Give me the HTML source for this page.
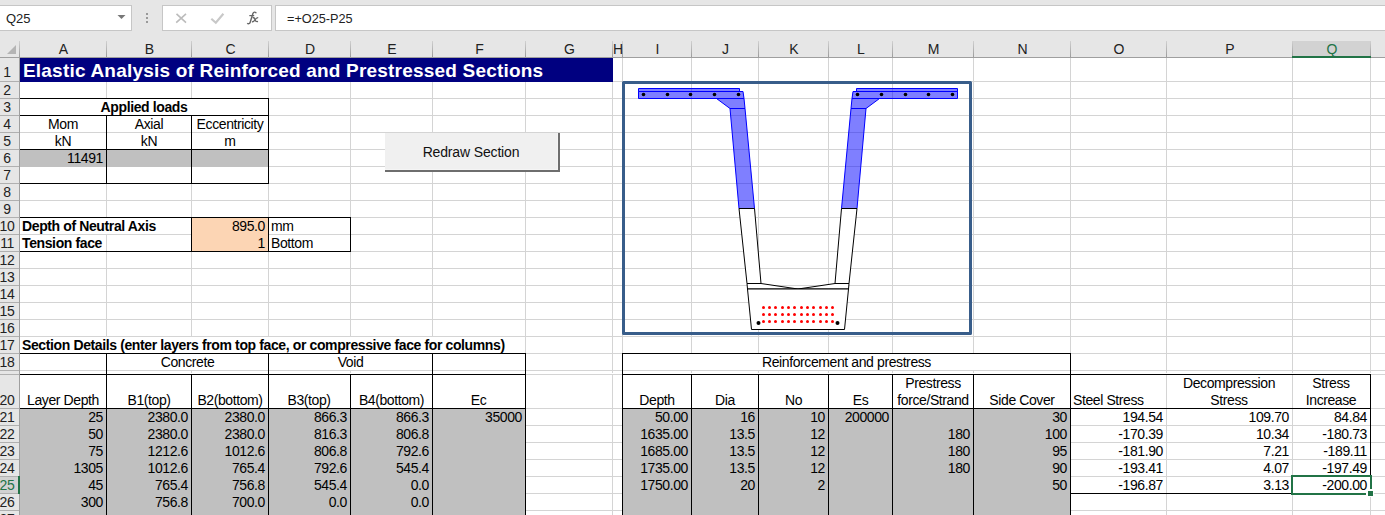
<!DOCTYPE html>
<html><head><meta charset="utf-8"><style>
html,body{margin:0;padding:0;}
body{width:1385px;height:515px;overflow:hidden;position:relative;background:#fff;font-family:"Liberation Sans", sans-serif;font-size:13.33px;color:#000;}
body>div{position:absolute;}
.t{white-space:pre;line-height:15px;height:15px;}
</style></head><body>
<div style="left:0px;top:0px;width:1385px;height:58px;background:#e6e6e6"></div>
<div style="left:-2px;top:5px;width:134px;height:26px;background:#fff;border:1px solid #c6c6c6;box-sizing:border-box"></div>
<div style="left:162px;top:5px;width:110px;height:26px;background:#fff;border:1px solid #c6c6c6;box-sizing:border-box"></div>
<svg style="position:absolute;left:0;top:0" width="300" height="40"><path d="M256.3,13.2 C255.6,11.6 253.6,11.7 252.9,13.6 L250.2,22.2 C249.7,23.9 248.2,24.1 247.2,23.2" stroke="#666" stroke-width="1.4" fill="none"/><path d="M249.3,15.6 L254.2,15.6" stroke="#666" stroke-width="1.2"/><path d="M252.6,17.6 C254,17.2 254.5,18 255,19.5 C255.5,21 256.2,22 258,21.4 M258.2,17.6 C256.8,17.4 255.5,19 254.6,20.3 C253.8,21.5 253,22 252,21.6" stroke="#666" stroke-width="1.3" fill="none"/></svg>
<div style="left:275px;top:5px;width:1120px;height:26px;background:#fff;border:1px solid #c6c6c6;box-sizing:border-box"></div>
<svg style="left:0;top:0;position:absolute" width="400" height="40"><polygon points="117.5,15 125.5,15 121.5,19" fill="#777"/><rect x="146" y="13" width="2" height="2" fill="#999"/><rect x="146" y="17" width="2" height="2" fill="#999"/><rect x="146" y="21" width="2" height="2" fill="#999"/><path d="M176.5,13.8 L186,22.6 M186,13.8 L176.2,22.6" stroke="#bcbcbc" stroke-width="1.6" fill="none"/><path d="M211.3,18.8 L215.8,22.8 L223.4,13.8" stroke="#c8c8c8" stroke-width="2.2" fill="none"/></svg>
<div class="t" style="left:6px;top:11px;font-size:13px;color:#222;">Q25</div>
<div class="t" style="left:287px;top:12px;font-size:12.7px;color:#222;">=+O25-P25</div>
<div style="left:0px;top:57px;width:1385px;height:1px;background:#9f9f9f"></div>
<svg style="left:0;top:0;position:absolute" width="20" height="58"><polygon points="16,45 16,54 7,54" fill="#b4b4b4"/></svg>
<div style="left:1293px;top:41px;width:77px;height:15px;background:#d2d2d2"></div>
<div style="left:19px;top:41px;width:1px;height:16px;background:linear-gradient(#d0d0d0,#9c9c9c)"></div>
<div style="left:106px;top:41px;width:1px;height:16px;background:linear-gradient(#d0d0d0,#9c9c9c)"></div>
<div style="left:191px;top:41px;width:1px;height:16px;background:linear-gradient(#d0d0d0,#9c9c9c)"></div>
<div style="left:268px;top:41px;width:1px;height:16px;background:linear-gradient(#d0d0d0,#9c9c9c)"></div>
<div style="left:350px;top:41px;width:1px;height:16px;background:linear-gradient(#d0d0d0,#9c9c9c)"></div>
<div style="left:432px;top:41px;width:1px;height:16px;background:linear-gradient(#d0d0d0,#9c9c9c)"></div>
<div style="left:525px;top:41px;width:1px;height:16px;background:linear-gradient(#d0d0d0,#9c9c9c)"></div>
<div style="left:612px;top:41px;width:1px;height:16px;background:linear-gradient(#d0d0d0,#9c9c9c)"></div>
<div style="left:622px;top:41px;width:1px;height:16px;background:linear-gradient(#d0d0d0,#9c9c9c)"></div>
<div style="left:691px;top:41px;width:1px;height:16px;background:linear-gradient(#d0d0d0,#9c9c9c)"></div>
<div style="left:758px;top:41px;width:1px;height:16px;background:linear-gradient(#d0d0d0,#9c9c9c)"></div>
<div style="left:828px;top:41px;width:1px;height:16px;background:linear-gradient(#d0d0d0,#9c9c9c)"></div>
<div style="left:892px;top:41px;width:1px;height:16px;background:linear-gradient(#d0d0d0,#9c9c9c)"></div>
<div style="left:973px;top:41px;width:1px;height:16px;background:linear-gradient(#d0d0d0,#9c9c9c)"></div>
<div style="left:1070px;top:41px;width:1px;height:16px;background:linear-gradient(#d0d0d0,#9c9c9c)"></div>
<div style="left:1166px;top:41px;width:1px;height:16px;background:linear-gradient(#d0d0d0,#9c9c9c)"></div>
<div style="left:1292px;top:41px;width:1px;height:16px;background:linear-gradient(#d0d0d0,#9c9c9c)"></div>
<div style="left:1370px;top:41px;width:1px;height:16px;background:linear-gradient(#d0d0d0,#9c9c9c)"></div>
<div class="t" style="left:-336.5px;width:800px;text-align:center;top:42px;font-size:14px;color:#222;">A</div>
<div class="t" style="left:-250.5px;width:800px;text-align:center;top:42px;font-size:14px;color:#222;">B</div>
<div class="t" style="left:-169.5px;width:800px;text-align:center;top:42px;font-size:14px;color:#222;">C</div>
<div class="t" style="left:-90.0px;width:800px;text-align:center;top:42px;font-size:14px;color:#222;">D</div>
<div class="t" style="left:-8.0px;width:800px;text-align:center;top:42px;font-size:14px;color:#222;">E</div>
<div class="t" style="left:79.5px;width:800px;text-align:center;top:42px;font-size:14px;color:#222;">F</div>
<div class="t" style="left:169.5px;width:800px;text-align:center;top:42px;font-size:14px;color:#222;">G</div>
<div class="t" style="left:218.0px;width:800px;text-align:center;top:42px;font-size:14px;color:#222;">H</div>
<div class="t" style="left:257.5px;width:800px;text-align:center;top:42px;font-size:14px;color:#222;">I</div>
<div class="t" style="left:325.5px;width:800px;text-align:center;top:42px;font-size:14px;color:#222;">J</div>
<div class="t" style="left:394.0px;width:800px;text-align:center;top:42px;font-size:14px;color:#222;">K</div>
<div class="t" style="left:461.0px;width:800px;text-align:center;top:42px;font-size:14px;color:#222;">L</div>
<div class="t" style="left:533.5px;width:800px;text-align:center;top:42px;font-size:14px;color:#222;">M</div>
<div class="t" style="left:622.5px;width:800px;text-align:center;top:42px;font-size:14px;color:#222;">N</div>
<div class="t" style="left:719.0px;width:800px;text-align:center;top:42px;font-size:14px;color:#222;">O</div>
<div class="t" style="left:830.0px;width:800px;text-align:center;top:42px;font-size:14px;color:#222;">P</div>
<div class="t" style="left:932.0px;width:800px;text-align:center;top:42px;font-size:14px;color:#217346;">Q</div>
<div style="left:1292px;top:56px;width:79px;height:2px;background:#217346"></div>
<div style="left:0px;top:58px;width:20px;height:457px;background:#e6e6e6"></div>
<div style="left:0px;top:477px;width:19px;height:16px;background:#d2d2d2"></div>
<div style="left:0px;top:81px;width:19px;height:1px;background:#b0b0b0"></div>
<div class="t" style="left:-393px;width:800px;text-align:center;top:65px;font-size:14px;letter-spacing:-0.4px;color:#222;">1</div>
<div style="left:0px;top:98px;width:19px;height:1px;background:#b0b0b0"></div>
<div class="t" style="left:-393px;width:800px;text-align:center;top:83px;font-size:14px;letter-spacing:-0.4px;color:#222;">2</div>
<div style="left:0px;top:115px;width:19px;height:1px;background:#b0b0b0"></div>
<div class="t" style="left:-393px;width:800px;text-align:center;top:100px;font-size:14px;letter-spacing:-0.4px;color:#222;">3</div>
<div style="left:0px;top:132px;width:19px;height:1px;background:#b0b0b0"></div>
<div class="t" style="left:-393px;width:800px;text-align:center;top:117px;font-size:14px;letter-spacing:-0.4px;color:#222;">4</div>
<div style="left:0px;top:149px;width:19px;height:1px;background:#b0b0b0"></div>
<div class="t" style="left:-393px;width:800px;text-align:center;top:134px;font-size:14px;letter-spacing:-0.4px;color:#222;">5</div>
<div style="left:0px;top:166px;width:19px;height:1px;background:#b0b0b0"></div>
<div class="t" style="left:-393px;width:800px;text-align:center;top:151px;font-size:14px;letter-spacing:-0.4px;color:#222;">6</div>
<div style="left:0px;top:183px;width:19px;height:1px;background:#b0b0b0"></div>
<div class="t" style="left:-393px;width:800px;text-align:center;top:168px;font-size:14px;letter-spacing:-0.4px;color:#222;">7</div>
<div style="left:0px;top:200px;width:19px;height:1px;background:#b0b0b0"></div>
<div class="t" style="left:-393px;width:800px;text-align:center;top:185px;font-size:14px;letter-spacing:-0.4px;color:#222;">8</div>
<div style="left:0px;top:217px;width:19px;height:1px;background:#b0b0b0"></div>
<div class="t" style="left:-393px;width:800px;text-align:center;top:202px;font-size:14px;letter-spacing:-0.4px;color:#222;">9</div>
<div style="left:0px;top:234px;width:19px;height:1px;background:#b0b0b0"></div>
<div class="t" style="left:-393px;width:800px;text-align:center;top:219px;font-size:14px;letter-spacing:-0.4px;color:#222;">10</div>
<div style="left:0px;top:251px;width:19px;height:1px;background:#b0b0b0"></div>
<div class="t" style="left:-393px;width:800px;text-align:center;top:236px;font-size:14px;letter-spacing:-0.4px;color:#222;">11</div>
<div style="left:0px;top:268px;width:19px;height:1px;background:#b0b0b0"></div>
<div class="t" style="left:-393px;width:800px;text-align:center;top:253px;font-size:14px;letter-spacing:-0.4px;color:#222;">12</div>
<div style="left:0px;top:285px;width:19px;height:1px;background:#b0b0b0"></div>
<div class="t" style="left:-393px;width:800px;text-align:center;top:270px;font-size:14px;letter-spacing:-0.4px;color:#222;">13</div>
<div style="left:0px;top:302px;width:19px;height:1px;background:#b0b0b0"></div>
<div class="t" style="left:-393px;width:800px;text-align:center;top:287px;font-size:14px;letter-spacing:-0.4px;color:#222;">14</div>
<div style="left:0px;top:319px;width:19px;height:1px;background:#b0b0b0"></div>
<div class="t" style="left:-393px;width:800px;text-align:center;top:304px;font-size:14px;letter-spacing:-0.4px;color:#222;">15</div>
<div style="left:0px;top:336px;width:19px;height:1px;background:#b0b0b0"></div>
<div class="t" style="left:-393px;width:800px;text-align:center;top:321px;font-size:14px;letter-spacing:-0.4px;color:#222;">16</div>
<div style="left:0px;top:353px;width:19px;height:1px;background:#b0b0b0"></div>
<div class="t" style="left:-393px;width:800px;text-align:center;top:338px;font-size:14px;letter-spacing:-0.4px;color:#222;">17</div>
<div style="left:0px;top:370px;width:19px;height:1px;background:#b0b0b0"></div>
<div class="t" style="left:-393px;width:800px;text-align:center;top:355px;font-size:14px;letter-spacing:-0.4px;color:#222;">18</div>
<div style="left:0px;top:374px;width:19px;height:1px;background:#b0b0b0"></div>
<div style="left:0px;top:408px;width:19px;height:1px;background:#b0b0b0"></div>
<div class="t" style="left:-393px;width:800px;text-align:center;top:393px;font-size:14px;letter-spacing:-0.4px;color:#222;">20</div>
<div style="left:0px;top:425px;width:19px;height:1px;background:#b0b0b0"></div>
<div class="t" style="left:-393px;width:800px;text-align:center;top:410px;font-size:14px;letter-spacing:-0.4px;color:#222;">21</div>
<div style="left:0px;top:442px;width:19px;height:1px;background:#b0b0b0"></div>
<div class="t" style="left:-393px;width:800px;text-align:center;top:427px;font-size:14px;letter-spacing:-0.4px;color:#222;">22</div>
<div style="left:0px;top:459px;width:19px;height:1px;background:#b0b0b0"></div>
<div class="t" style="left:-393px;width:800px;text-align:center;top:444px;font-size:14px;letter-spacing:-0.4px;color:#222;">23</div>
<div style="left:0px;top:476px;width:19px;height:1px;background:#b0b0b0"></div>
<div class="t" style="left:-393px;width:800px;text-align:center;top:461px;font-size:14px;letter-spacing:-0.4px;color:#222;">24</div>
<div style="left:0px;top:493px;width:19px;height:1px;background:#b0b0b0"></div>
<div class="t" style="left:-393px;width:800px;text-align:center;top:478px;font-size:14px;letter-spacing:-0.4px;color:#217346;">25</div>
<div style="left:0px;top:510px;width:19px;height:1px;background:#b0b0b0"></div>
<div class="t" style="left:-393px;width:800px;text-align:center;top:495px;font-size:14px;letter-spacing:-0.4px;color:#222;">26</div>
<div style="left:0px;top:527px;width:19px;height:1px;background:#b0b0b0"></div>
<div class="t" style="left:-393px;width:800px;text-align:center;top:512px;font-size:14px;letter-spacing:-0.4px;color:#222;">27</div>
<div style="left:19px;top:58px;width:1px;height:457px;background:#9f9f9f"></div>
<div style="left:18px;top:476px;width:2px;height:18px;background:#217346"></div>
<div style="left:106px;top:58px;width:1px;height:457px;background:#d4d4d4"></div>
<div style="left:191px;top:58px;width:1px;height:457px;background:#d4d4d4"></div>
<div style="left:268px;top:58px;width:1px;height:457px;background:#d4d4d4"></div>
<div style="left:350px;top:58px;width:1px;height:457px;background:#d4d4d4"></div>
<div style="left:432px;top:58px;width:1px;height:457px;background:#d4d4d4"></div>
<div style="left:525px;top:58px;width:1px;height:457px;background:#d4d4d4"></div>
<div style="left:612px;top:58px;width:1px;height:457px;background:#d4d4d4"></div>
<div style="left:622px;top:58px;width:1px;height:457px;background:#d4d4d4"></div>
<div style="left:691px;top:58px;width:1px;height:457px;background:#d4d4d4"></div>
<div style="left:758px;top:58px;width:1px;height:457px;background:#d4d4d4"></div>
<div style="left:828px;top:58px;width:1px;height:457px;background:#d4d4d4"></div>
<div style="left:892px;top:58px;width:1px;height:457px;background:#d4d4d4"></div>
<div style="left:973px;top:58px;width:1px;height:457px;background:#d4d4d4"></div>
<div style="left:1070px;top:58px;width:1px;height:457px;background:#d4d4d4"></div>
<div style="left:1166px;top:58px;width:1px;height:457px;background:#d4d4d4"></div>
<div style="left:1292px;top:58px;width:1px;height:457px;background:#d4d4d4"></div>
<div style="left:1370px;top:58px;width:1px;height:457px;background:#d4d4d4"></div>
<div style="left:20px;top:81px;width:1365px;height:1px;background:#d4d4d4"></div>
<div style="left:20px;top:98px;width:1365px;height:1px;background:#d4d4d4"></div>
<div style="left:20px;top:115px;width:1365px;height:1px;background:#d4d4d4"></div>
<div style="left:20px;top:132px;width:1365px;height:1px;background:#d4d4d4"></div>
<div style="left:20px;top:149px;width:1365px;height:1px;background:#d4d4d4"></div>
<div style="left:20px;top:166px;width:1365px;height:1px;background:#d4d4d4"></div>
<div style="left:20px;top:183px;width:1365px;height:1px;background:#d4d4d4"></div>
<div style="left:20px;top:200px;width:1365px;height:1px;background:#d4d4d4"></div>
<div style="left:20px;top:217px;width:1365px;height:1px;background:#d4d4d4"></div>
<div style="left:20px;top:234px;width:1365px;height:1px;background:#d4d4d4"></div>
<div style="left:20px;top:251px;width:1365px;height:1px;background:#d4d4d4"></div>
<div style="left:20px;top:268px;width:1365px;height:1px;background:#d4d4d4"></div>
<div style="left:20px;top:285px;width:1365px;height:1px;background:#d4d4d4"></div>
<div style="left:20px;top:302px;width:1365px;height:1px;background:#d4d4d4"></div>
<div style="left:20px;top:319px;width:1365px;height:1px;background:#d4d4d4"></div>
<div style="left:20px;top:336px;width:1365px;height:1px;background:#d4d4d4"></div>
<div style="left:20px;top:353px;width:1365px;height:1px;background:#d4d4d4"></div>
<div style="left:20px;top:370px;width:1365px;height:1px;background:#d4d4d4"></div>
<div style="left:20px;top:374px;width:1365px;height:1px;background:#d4d4d4"></div>
<div style="left:20px;top:408px;width:1365px;height:1px;background:#d4d4d4"></div>
<div style="left:20px;top:425px;width:1365px;height:1px;background:#d4d4d4"></div>
<div style="left:20px;top:442px;width:1365px;height:1px;background:#d4d4d4"></div>
<div style="left:20px;top:459px;width:1365px;height:1px;background:#d4d4d4"></div>
<div style="left:20px;top:476px;width:1365px;height:1px;background:#d4d4d4"></div>
<div style="left:20px;top:493px;width:1365px;height:1px;background:#d4d4d4"></div>
<div style="left:20px;top:510px;width:1365px;height:1px;background:#d4d4d4"></div>
<div style="left:20px;top:527px;width:1365px;height:1px;background:#d4d4d4"></div>
<div style="left:106px;top:99px;width:1px;height:16px;background:#fff"></div>
<div style="left:191px;top:99px;width:1px;height:16px;background:#fff"></div>
<div style="left:106px;top:218px;width:1px;height:16px;background:#fff"></div>
<div style="left:106px;top:337px;width:1px;height:16px;background:#fff"></div>
<div style="left:191px;top:337px;width:1px;height:16px;background:#fff"></div>
<div style="left:268px;top:337px;width:1px;height:16px;background:#fff"></div>
<div style="left:350px;top:337px;width:1px;height:16px;background:#fff"></div>
<div style="left:432px;top:337px;width:1px;height:16px;background:#fff"></div>
<div style="left:191px;top:354px;width:1px;height:16px;background:#fff"></div>
<div style="left:350px;top:354px;width:1px;height:16px;background:#fff"></div>
<div style="left:691px;top:354px;width:1px;height:16px;background:#fff"></div>
<div style="left:758px;top:354px;width:1px;height:16px;background:#fff"></div>
<div style="left:828px;top:354px;width:1px;height:16px;background:#fff"></div>
<div style="left:892px;top:354px;width:1px;height:16px;background:#fff"></div>
<div style="left:973px;top:354px;width:1px;height:16px;background:#fff"></div>
<div style="left:20px;top:58px;width:593px;height:24px;background:#000080"></div>
<div style="left:20px;top:150px;width:248px;height:17px;background:#c0c0c0"></div>
<div style="left:192px;top:218px;width:76px;height:34px;background:#fcd5b4"></div>
<div style="left:20px;top:409px;width:505px;height:106px;background:#c0c0c0"></div>
<div style="left:623px;top:409px;width:447px;height:106px;background:#c0c0c0"></div>
<div style="left:20px;top:373px;width:1365px;height:1px;background:#fff"></div>
<div style="left:0px;top:371px;width:19px;height:3px;background:#e6e6e6"></div>
<div style="left:20px;top:98px;width:249px;height:1px;background:#000"></div>
<div style="left:20px;top:115px;width:249px;height:1px;background:#000"></div>
<div style="left:20px;top:149px;width:249px;height:1px;background:#000"></div>
<div style="left:20px;top:183px;width:249px;height:1px;background:#000"></div>
<div style="left:106px;top:115px;width:1px;height:69px;background:#000"></div>
<div style="left:191px;top:115px;width:1px;height:69px;background:#000"></div>
<div style="left:268px;top:98px;width:1px;height:86px;background:#000"></div>
<div style="left:20px;top:217px;width:331px;height:1px;background:#000"></div>
<div style="left:20px;top:251px;width:331px;height:1px;background:#000"></div>
<div style="left:191px;top:217px;width:1px;height:35px;background:#000"></div>
<div style="left:268px;top:217px;width:1px;height:35px;background:#000"></div>
<div style="left:350px;top:217px;width:1px;height:35px;background:#000"></div>
<div style="left:20px;top:353px;width:506px;height:1px;background:#000"></div>
<div style="left:20px;top:374px;width:506px;height:1px;background:#000"></div>
<div style="left:20px;top:408px;width:506px;height:1px;background:#000"></div>
<div style="left:106px;top:353px;width:1px;height:162px;background:#000"></div>
<div style="left:268px;top:353px;width:1px;height:162px;background:#000"></div>
<div style="left:432px;top:353px;width:1px;height:162px;background:#000"></div>
<div style="left:525px;top:353px;width:1px;height:162px;background:#000"></div>
<div style="left:191px;top:374px;width:1px;height:141px;background:#000"></div>
<div style="left:350px;top:374px;width:1px;height:141px;background:#000"></div>
<div style="left:622px;top:353px;width:449px;height:1px;background:#000"></div>
<div style="left:622px;top:374px;width:749px;height:1px;background:#000"></div>
<div style="left:622px;top:408px;width:749px;height:1px;background:#000"></div>
<div style="left:622px;top:353px;width:1px;height:162px;background:#000"></div>
<div style="left:1070px;top:353px;width:1px;height:162px;background:#000"></div>
<div style="left:691px;top:374px;width:1px;height:141px;background:#000"></div>
<div style="left:758px;top:374px;width:1px;height:141px;background:#000"></div>
<div style="left:828px;top:374px;width:1px;height:141px;background:#000"></div>
<div style="left:892px;top:374px;width:1px;height:141px;background:#000"></div>
<div style="left:973px;top:374px;width:1px;height:141px;background:#000"></div>
<div style="left:1370px;top:374px;width:1px;height:120px;background:#000"></div>
<div style="left:1070px;top:493px;width:301px;height:1px;background:#000"></div>
<div class="t" style="left:23px;top:63px;font-weight:bold;font-size:19px;color:#fff;letter-spacing:0.2px;">Elastic Analysis of Reinforced and Prestressed Sections</div>
<div class="t" style="left:-256px;width:800px;text-align:center;top:100px;font-weight:bold;font-size:14px;letter-spacing:-0.38px;">Applied loads</div>
<div class="t" style="left:-337px;width:800px;text-align:center;top:117px;font-size:14px;letter-spacing:-0.4px;">Mom</div>
<div class="t" style="left:-251px;width:800px;text-align:center;top:117px;font-size:14px;letter-spacing:-0.4px;">Axial</div>
<div class="t" style="left:-170px;width:800px;text-align:center;top:117px;font-size:14px;letter-spacing:-0.4px;">Eccentricity</div>
<div class="t" style="left:-337px;width:800px;text-align:center;top:134px;font-size:14px;letter-spacing:-0.4px;">kN</div>
<div class="t" style="left:-251px;width:800px;text-align:center;top:134px;font-size:14px;letter-spacing:-0.4px;">kN</div>
<div class="t" style="left:-170px;width:800px;text-align:center;top:134px;font-size:14px;letter-spacing:-0.4px;">m</div>
<div class="t" style="left:-497px;width:600px;text-align:right;top:151px;font-size:14px;letter-spacing:-0.4px;">11491</div>
<div class="t" style="left:22px;top:219px;font-weight:bold;font-size:14px;letter-spacing:-0.38px;">Depth of Neutral Axis</div>
<div class="t" style="left:22px;top:236px;font-weight:bold;font-size:14px;letter-spacing:-0.38px;">Tension face</div>
<div class="t" style="left:-335px;width:600px;text-align:right;top:219px;font-size:14px;letter-spacing:-0.4px;">895.0</div>
<div class="t" style="left:-335px;width:600px;text-align:right;top:236px;font-size:14px;letter-spacing:-0.4px;">1</div>
<div class="t" style="left:271px;top:219px;font-size:14px;letter-spacing:-0.4px;">mm</div>
<div class="t" style="left:271px;top:236px;font-size:14px;letter-spacing:-0.4px;">Bottom</div>
<div class="t" style="left:22px;top:338px;font-weight:bold;font-size:14px;letter-spacing:-0.38px;">Section Details (enter layers from top face, or compressive face for columns)</div>
<div class="t" style="left:-212.5px;width:800px;text-align:center;top:355px;font-size:14px;letter-spacing:-0.4px;">Concrete</div>
<div class="t" style="left:-49.5px;width:800px;text-align:center;top:355px;font-size:14px;letter-spacing:-0.4px;">Void</div>
<div class="t" style="left:446.5px;width:800px;text-align:center;top:355px;font-size:14px;letter-spacing:-0.4px;">Reinforcement and prestress</div>
<div class="t" style="left:-337px;width:800px;text-align:center;top:393px;font-size:14px;letter-spacing:-0.4px;">Layer Depth</div>
<div class="t" style="left:-251px;width:800px;text-align:center;top:393px;font-size:14px;letter-spacing:-0.4px;">B1(top)</div>
<div class="t" style="left:-170px;width:800px;text-align:center;top:393px;font-size:14px;letter-spacing:-0.4px;">B2(bottom)</div>
<div class="t" style="left:-91px;width:800px;text-align:center;top:393px;font-size:14px;letter-spacing:-0.4px;">B3(top)</div>
<div class="t" style="left:-8.5px;width:800px;text-align:center;top:393px;font-size:14px;letter-spacing:-0.4px;">B4(bottom)</div>
<div class="t" style="left:78.5px;width:800px;text-align:center;top:393px;font-size:14px;letter-spacing:-0.4px;">Ec</div>
<div class="t" style="left:257px;width:800px;text-align:center;top:393px;font-size:14px;letter-spacing:-0.4px;">Depth</div>
<div class="t" style="left:325px;width:800px;text-align:center;top:393px;font-size:14px;letter-spacing:-0.4px;">Dia</div>
<div class="t" style="left:393.5px;width:800px;text-align:center;top:393px;font-size:14px;letter-spacing:-0.4px;">No</div>
<div class="t" style="left:460.5px;width:800px;text-align:center;top:393px;font-size:14px;letter-spacing:-0.4px;">Es</div>
<div class="t" style="left:533px;width:800px;text-align:center;top:393px;font-size:14px;letter-spacing:-0.4px;">force/Strand</div>
<div class="t" style="left:622px;width:800px;text-align:center;top:393px;font-size:14px;letter-spacing:-0.4px;">Side Cover</div>
<div class="t" style="left:829px;width:800px;text-align:center;top:393px;font-size:14px;letter-spacing:-0.4px;">Stress</div>
<div class="t" style="left:931px;width:800px;text-align:center;top:393px;font-size:14px;letter-spacing:-0.4px;">Increase</div>
<div class="t" style="left:533px;width:800px;text-align:center;top:376px;font-size:14px;letter-spacing:-0.4px;">Prestress</div>
<div class="t" style="left:829px;width:800px;text-align:center;top:376px;font-size:14px;letter-spacing:-0.4px;">Decompression</div>
<div class="t" style="left:931px;width:800px;text-align:center;top:376px;font-size:14px;letter-spacing:-0.4px;">Stress</div>
<div class="t" style="left:1073px;top:393px;font-size:14px;letter-spacing:-0.4px;">Steel Stress</div>
<div class="t" style="left:-497px;width:600px;text-align:right;top:410px;font-size:14px;letter-spacing:-0.4px;">25</div>
<div class="t" style="left:-497px;width:600px;text-align:right;top:427px;font-size:14px;letter-spacing:-0.4px;">50</div>
<div class="t" style="left:-497px;width:600px;text-align:right;top:444px;font-size:14px;letter-spacing:-0.4px;">75</div>
<div class="t" style="left:-497px;width:600px;text-align:right;top:461px;font-size:14px;letter-spacing:-0.4px;">1305</div>
<div class="t" style="left:-497px;width:600px;text-align:right;top:478px;font-size:14px;letter-spacing:-0.4px;">45</div>
<div class="t" style="left:-497px;width:600px;text-align:right;top:495px;font-size:14px;letter-spacing:-0.4px;">300</div>
<div class="t" style="left:-412px;width:600px;text-align:right;top:410px;font-size:14px;letter-spacing:-0.4px;">2380.0</div>
<div class="t" style="left:-412px;width:600px;text-align:right;top:427px;font-size:14px;letter-spacing:-0.4px;">2380.0</div>
<div class="t" style="left:-412px;width:600px;text-align:right;top:444px;font-size:14px;letter-spacing:-0.4px;">1212.6</div>
<div class="t" style="left:-412px;width:600px;text-align:right;top:461px;font-size:14px;letter-spacing:-0.4px;">1012.6</div>
<div class="t" style="left:-412px;width:600px;text-align:right;top:478px;font-size:14px;letter-spacing:-0.4px;">765.4</div>
<div class="t" style="left:-412px;width:600px;text-align:right;top:495px;font-size:14px;letter-spacing:-0.4px;">756.8</div>
<div class="t" style="left:-335px;width:600px;text-align:right;top:410px;font-size:14px;letter-spacing:-0.4px;">2380.0</div>
<div class="t" style="left:-335px;width:600px;text-align:right;top:427px;font-size:14px;letter-spacing:-0.4px;">2380.0</div>
<div class="t" style="left:-335px;width:600px;text-align:right;top:444px;font-size:14px;letter-spacing:-0.4px;">1012.6</div>
<div class="t" style="left:-335px;width:600px;text-align:right;top:461px;font-size:14px;letter-spacing:-0.4px;">765.4</div>
<div class="t" style="left:-335px;width:600px;text-align:right;top:478px;font-size:14px;letter-spacing:-0.4px;">756.8</div>
<div class="t" style="left:-335px;width:600px;text-align:right;top:495px;font-size:14px;letter-spacing:-0.4px;">700.0</div>
<div class="t" style="left:-253px;width:600px;text-align:right;top:410px;font-size:14px;letter-spacing:-0.4px;">866.3</div>
<div class="t" style="left:-253px;width:600px;text-align:right;top:427px;font-size:14px;letter-spacing:-0.4px;">816.3</div>
<div class="t" style="left:-253px;width:600px;text-align:right;top:444px;font-size:14px;letter-spacing:-0.4px;">806.8</div>
<div class="t" style="left:-253px;width:600px;text-align:right;top:461px;font-size:14px;letter-spacing:-0.4px;">792.6</div>
<div class="t" style="left:-253px;width:600px;text-align:right;top:478px;font-size:14px;letter-spacing:-0.4px;">545.4</div>
<div class="t" style="left:-253px;width:600px;text-align:right;top:495px;font-size:14px;letter-spacing:-0.4px;">0.0</div>
<div class="t" style="left:-171px;width:600px;text-align:right;top:410px;font-size:14px;letter-spacing:-0.4px;">866.3</div>
<div class="t" style="left:-171px;width:600px;text-align:right;top:427px;font-size:14px;letter-spacing:-0.4px;">806.8</div>
<div class="t" style="left:-171px;width:600px;text-align:right;top:444px;font-size:14px;letter-spacing:-0.4px;">792.6</div>
<div class="t" style="left:-171px;width:600px;text-align:right;top:461px;font-size:14px;letter-spacing:-0.4px;">545.4</div>
<div class="t" style="left:-171px;width:600px;text-align:right;top:478px;font-size:14px;letter-spacing:-0.4px;">0.0</div>
<div class="t" style="left:-171px;width:600px;text-align:right;top:495px;font-size:14px;letter-spacing:-0.4px;">0.0</div>
<div class="t" style="left:-78px;width:600px;text-align:right;top:410px;font-size:14px;letter-spacing:-0.4px;">35000</div>
<div class="t" style="left:88px;width:600px;text-align:right;top:410px;font-size:14px;letter-spacing:-0.4px;">50.00</div>
<div class="t" style="left:88px;width:600px;text-align:right;top:427px;font-size:14px;letter-spacing:-0.4px;">1635.00</div>
<div class="t" style="left:88px;width:600px;text-align:right;top:444px;font-size:14px;letter-spacing:-0.4px;">1685.00</div>
<div class="t" style="left:88px;width:600px;text-align:right;top:461px;font-size:14px;letter-spacing:-0.4px;">1735.00</div>
<div class="t" style="left:88px;width:600px;text-align:right;top:478px;font-size:14px;letter-spacing:-0.4px;">1750.00</div>
<div class="t" style="left:155px;width:600px;text-align:right;top:410px;font-size:14px;letter-spacing:-0.4px;">16</div>
<div class="t" style="left:155px;width:600px;text-align:right;top:427px;font-size:14px;letter-spacing:-0.4px;">13.5</div>
<div class="t" style="left:155px;width:600px;text-align:right;top:444px;font-size:14px;letter-spacing:-0.4px;">13.5</div>
<div class="t" style="left:155px;width:600px;text-align:right;top:461px;font-size:14px;letter-spacing:-0.4px;">13.5</div>
<div class="t" style="left:155px;width:600px;text-align:right;top:478px;font-size:14px;letter-spacing:-0.4px;">20</div>
<div class="t" style="left:225px;width:600px;text-align:right;top:410px;font-size:14px;letter-spacing:-0.4px;">10</div>
<div class="t" style="left:225px;width:600px;text-align:right;top:427px;font-size:14px;letter-spacing:-0.4px;">12</div>
<div class="t" style="left:225px;width:600px;text-align:right;top:444px;font-size:14px;letter-spacing:-0.4px;">12</div>
<div class="t" style="left:225px;width:600px;text-align:right;top:461px;font-size:14px;letter-spacing:-0.4px;">12</div>
<div class="t" style="left:225px;width:600px;text-align:right;top:478px;font-size:14px;letter-spacing:-0.4px;">2</div>
<div class="t" style="left:289px;width:600px;text-align:right;top:410px;font-size:14px;letter-spacing:-0.4px;">200000</div>
<div class="t" style="left:370px;width:600px;text-align:right;top:427px;font-size:14px;letter-spacing:-0.4px;">180</div>
<div class="t" style="left:370px;width:600px;text-align:right;top:444px;font-size:14px;letter-spacing:-0.4px;">180</div>
<div class="t" style="left:370px;width:600px;text-align:right;top:461px;font-size:14px;letter-spacing:-0.4px;">180</div>
<div class="t" style="left:467px;width:600px;text-align:right;top:410px;font-size:14px;letter-spacing:-0.4px;">30</div>
<div class="t" style="left:467px;width:600px;text-align:right;top:427px;font-size:14px;letter-spacing:-0.4px;">100</div>
<div class="t" style="left:467px;width:600px;text-align:right;top:444px;font-size:14px;letter-spacing:-0.4px;">95</div>
<div class="t" style="left:467px;width:600px;text-align:right;top:461px;font-size:14px;letter-spacing:-0.4px;">90</div>
<div class="t" style="left:467px;width:600px;text-align:right;top:478px;font-size:14px;letter-spacing:-0.4px;">50</div>
<div class="t" style="left:563px;width:600px;text-align:right;top:410px;font-size:14px;letter-spacing:-0.4px;">194.54</div>
<div class="t" style="left:563px;width:600px;text-align:right;top:427px;font-size:14px;letter-spacing:-0.4px;">-170.39</div>
<div class="t" style="left:563px;width:600px;text-align:right;top:444px;font-size:14px;letter-spacing:-0.4px;">-181.90</div>
<div class="t" style="left:563px;width:600px;text-align:right;top:461px;font-size:14px;letter-spacing:-0.4px;">-193.41</div>
<div class="t" style="left:563px;width:600px;text-align:right;top:478px;font-size:14px;letter-spacing:-0.4px;">-196.87</div>
<div class="t" style="left:689px;width:600px;text-align:right;top:410px;font-size:14px;letter-spacing:-0.4px;">109.70</div>
<div class="t" style="left:689px;width:600px;text-align:right;top:427px;font-size:14px;letter-spacing:-0.4px;">10.34</div>
<div class="t" style="left:689px;width:600px;text-align:right;top:444px;font-size:14px;letter-spacing:-0.4px;">7.21</div>
<div class="t" style="left:689px;width:600px;text-align:right;top:461px;font-size:14px;letter-spacing:-0.4px;">4.07</div>
<div class="t" style="left:689px;width:600px;text-align:right;top:478px;font-size:14px;letter-spacing:-0.4px;">3.13</div>
<div class="t" style="left:767px;width:600px;text-align:right;top:410px;font-size:14px;letter-spacing:-0.4px;">84.84</div>
<div class="t" style="left:767px;width:600px;text-align:right;top:427px;font-size:14px;letter-spacing:-0.4px;">-180.73</div>
<div class="t" style="left:767px;width:600px;text-align:right;top:444px;font-size:14px;letter-spacing:-0.4px;">-189.11</div>
<div class="t" style="left:767px;width:600px;text-align:right;top:461px;font-size:14px;letter-spacing:-0.4px;">-197.49</div>
<div class="t" style="left:767px;width:600px;text-align:right;top:478px;font-size:14px;letter-spacing:-0.4px;">-200.00</div>
<div style="left:1291px;top:475px;width:81px;height:20px;border:2px solid #217346;box-sizing:border-box"></div>
<div style="left:1366px;top:489px;width:8px;height:8px;background:#fff"></div>
<div style="left:1368px;top:491px;width:5px;height:5px;background:#217346"></div>
<div style="left:385px;top:133px;width:175px;height:39px;background:#f0f0f0;box-sizing:border-box;border-right:2px solid #6e6e6e;border-bottom:2px solid #6e6e6e;box-shadow:inset -1px -1px 0 #f5f5f5"></div>
<div class="t" style="left:71px;width:800px;text-align:center;top:145px;font-size:14px;letter-spacing:-0.4px;color:#111;letter-spacing:-0.15px;">Redraw Section</div>
<svg style="position:absolute;left:0;top:0" width="1385" height="515"><polygon points="638.5,88.5 739.5,88.5 739.5,91.5 638.5,91.5" fill="rgba(0,0,255,0.5)" stroke="#0000ff" stroke-width="1"/><polygon points="957.5,88.5 856.5,88.5 856.5,91.5 957.5,91.5" fill="rgba(0,0,255,0.5)" stroke="#0000ff" stroke-width="1"/><polygon points="638.5,91.5 743.0,91.5 744.0,98.5 638.5,98.5" fill="rgba(0,0,255,0.5)" stroke="#0000ff" stroke-width="1"/><polygon points="957.5,91.5 853.0,91.5 852.0,98.5 957.5,98.5" fill="rgba(0,0,255,0.5)" stroke="#0000ff" stroke-width="1"/><polygon points="716.5,98.5 744.0,98.5 745.0,108.5 730.0,108.5" fill="rgba(0,0,255,0.5)" stroke="#0000ff" stroke-width="1"/><polygon points="879.5,98.5 852.0,98.5 851.0,108.5 866.0,108.5" fill="rgba(0,0,255,0.5)" stroke="#0000ff" stroke-width="1"/><polygon points="730.0,108.5 745.0,108.5 754.5,208.5 739.0,208.5" fill="rgba(0,0,255,0.5)" stroke="#0000ff" stroke-width="1"/><polygon points="866.0,108.5 851.0,108.5 841.5,208.5 857.0,208.5" fill="rgba(0,0,255,0.5)" stroke="#0000ff" stroke-width="1"/><polygon points="739.0,208.5 754.5,208.5 761.0,283.5 747.0,283.5" fill="#fff" stroke="#000" stroke-width="1"/><polygon points="857.0,208.5 841.5,208.5 835.0,283.5 849.0,283.5" fill="#fff" stroke="#000" stroke-width="1"/><polygon points="747.0,283.5 761.0,283.5 798.0,289.0 835.0,283.5 849.0,283.5 848.5,289.0 747.5,289.0" fill="#fff" stroke="#000" stroke-width="1"/><polygon points="747.5,289.0 848.5,289.0 844.5,329.5 751.5,329.5" fill="#fff" stroke="#000" stroke-width="1"/><circle cx="643.5" cy="94.5" r="1.8" fill="#000"/><circle cx="952.5" cy="94.5" r="1.8" fill="#000"/><circle cx="667.5" cy="94.5" r="1.8" fill="#000"/><circle cx="928.5" cy="94.5" r="1.8" fill="#000"/><circle cx="690.5" cy="94.5" r="1.8" fill="#000"/><circle cx="905.5" cy="94.5" r="1.8" fill="#000"/><circle cx="714.5" cy="94.5" r="1.8" fill="#000"/><circle cx="881.5" cy="94.5" r="1.8" fill="#000"/><circle cx="738.5" cy="94.5" r="1.8" fill="#000"/><circle cx="857.5" cy="94.5" r="1.8" fill="#000"/><circle cx="763.5" cy="307.5" r="1.5" fill="#ff0000"/><circle cx="769.5" cy="307.5" r="1.5" fill="#ff0000"/><circle cx="775.5" cy="307.5" r="1.5" fill="#ff0000"/><circle cx="782.5" cy="307.5" r="1.5" fill="#ff0000"/><circle cx="788.5" cy="307.5" r="1.5" fill="#ff0000"/><circle cx="794.5" cy="307.5" r="1.5" fill="#ff0000"/><circle cx="801.5" cy="307.5" r="1.5" fill="#ff0000"/><circle cx="807.5" cy="307.5" r="1.5" fill="#ff0000"/><circle cx="813.5" cy="307.5" r="1.5" fill="#ff0000"/><circle cx="820.5" cy="307.5" r="1.5" fill="#ff0000"/><circle cx="826.5" cy="307.5" r="1.5" fill="#ff0000"/><circle cx="832.5" cy="307.5" r="1.5" fill="#ff0000"/><circle cx="763.5" cy="314.5" r="1.5" fill="#ff0000"/><circle cx="769.5" cy="314.5" r="1.5" fill="#ff0000"/><circle cx="775.5" cy="314.5" r="1.5" fill="#ff0000"/><circle cx="782.5" cy="314.5" r="1.5" fill="#ff0000"/><circle cx="788.5" cy="314.5" r="1.5" fill="#ff0000"/><circle cx="794.5" cy="314.5" r="1.5" fill="#ff0000"/><circle cx="801.5" cy="314.5" r="1.5" fill="#ff0000"/><circle cx="807.5" cy="314.5" r="1.5" fill="#ff0000"/><circle cx="813.5" cy="314.5" r="1.5" fill="#ff0000"/><circle cx="820.5" cy="314.5" r="1.5" fill="#ff0000"/><circle cx="826.5" cy="314.5" r="1.5" fill="#ff0000"/><circle cx="832.5" cy="314.5" r="1.5" fill="#ff0000"/><circle cx="763.5" cy="321.5" r="1.5" fill="#ff0000"/><circle cx="769.5" cy="321.5" r="1.5" fill="#ff0000"/><circle cx="775.5" cy="321.5" r="1.5" fill="#ff0000"/><circle cx="782.5" cy="321.5" r="1.5" fill="#ff0000"/><circle cx="788.5" cy="321.5" r="1.5" fill="#ff0000"/><circle cx="794.5" cy="321.5" r="1.5" fill="#ff0000"/><circle cx="801.5" cy="321.5" r="1.5" fill="#ff0000"/><circle cx="807.5" cy="321.5" r="1.5" fill="#ff0000"/><circle cx="813.5" cy="321.5" r="1.5" fill="#ff0000"/><circle cx="820.5" cy="321.5" r="1.5" fill="#ff0000"/><circle cx="826.5" cy="321.5" r="1.5" fill="#ff0000"/><circle cx="832.5" cy="321.5" r="1.5" fill="#ff0000"/><circle cx="758.5" cy="323" r="2" fill="#000"/><circle cx="837.5" cy="323" r="2" fill="#000"/><rect x="623.5" y="82.5" width="347" height="251" fill="none" stroke="#385d8a" stroke-width="3" stroke-linejoin="round"/></svg>
</body></html>
